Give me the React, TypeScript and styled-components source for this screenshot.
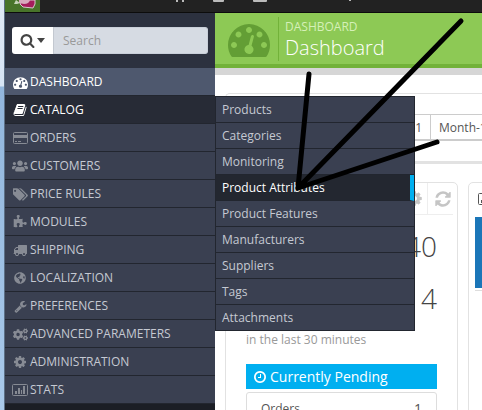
import React from 'react';
import styled, { createGlobalStyle } from 'styled-components';
import { FaUsers, FaGlobeAmericas, FaCogs } from 'react-icons/fa';

const GlobalStyle = createGlobalStyle`
  *, *::before, *::after { box-sizing: border-box; }
  body {
    margin: 0;
    background: #fff;
    color: #555;
    font-family: "Open Sans", "Noto Sans", sans-serif;
    font-size: 12px;
    line-height: 16px;
  }
  ul { list-style: none; margin: 0; padding: 0; }
  a { color: inherit; text-decoration: none; }
  h1, h2, p, dl, dd { margin: 0; font-weight: 400; }
  button { font: inherit; cursor: pointer; }
`;

const paths = {
  search:
    'M1216 832q0-185-131.5-316.5t-316.5-131.5-316.5 131.5-131.5 316.5 131.5 316.5 316.5 131.5 316.5-131.5 131.5-316.5zm512 832q0 52-38 90t-90 38q-54 0-90-38l-343-342q-179 124-399 124-143 0-273.5-55.5t-225-150-150-225-55.5-273.5 55.5-273.5 150-225 225-150 273.5-55.5 273.5 55.5 225 150 150 225 55.5 273.5q0 220-124 399l343 343q37 37 37 90z',
  gauge:
    'M384 1152q0-53-37.5-90.5t-90.5-37.5-90.5 37.5-37.5 90.5 37.5 90.5 90.5 37.5 90.5-37.5 37.5-90.5zm192-448q0-53-37.5-90.5t-90.5-37.5-90.5 37.5-37.5 90.5 37.5 90.5 90.5 37.5 90.5-37.5 37.5-90.5zm428 481l101-382q6-26-7.5-48.5t-38.5-29.5-48 6.5-30 39.5l-101 382q-60 5-107 43.5t-63 98.5q-20 77 20 146t117 89 146-20 89-117q16-60-6-117t-72-91zm660-33q0-53-37.5-90.5t-90.5-37.5-90.5 37.5-37.5 90.5 37.5 90.5 90.5 37.5 90.5-37.5 37.5-90.5zm-640-640q0-53-37.5-90.5t-90.5-37.5-90.5 37.5-37.5 90.5 37.5 90.5 90.5 37.5 90.5-37.5 37.5-90.5zm448 192q0-53-37.5-90.5t-90.5-37.5-90.5 37.5-37.5 90.5 37.5 90.5 90.5 37.5 90.5-37.5 37.5-90.5zm320 448q0 261-141 483-19 29-54 29h-1402q-35 0-54-29-141-221-141-483 0-182 71-348t191-286 286-191 348-71 348 71 286 191 191 286 71 348z',
  book:
    'M1703 478q40 57 18 129l-275 906q-19 64-76.5 107.5t-122.5 43.5h-923q-77 0-148.5-53.5t-99.5-131.5q-24-67-2-127 0-4 3-27t4-37q1-8-3-21.5t-3-19.5q2-11 8-21t16.5-23.5 16.5-23.5q23-38 45-91.5t30-91.5q3-10 .5-30t-.5-28q3-11 17-28t17-23q21-36 42-92t25-90q1-9-2.5-32t.5-28q4-13 22-30.5t22-22.5q19-26 42.5-84.5t27.5-96.5q1-8-3-25.5t-2-26.5q2-8 9-18t18-23 17-21q8-12 16.5-30.5t15-35 16-36 19.5-32 26.5-23.5 36-11.5 47.5 5.5l-1 3q38-9 51-9h761q74 0 114 56t18 130l-274 906q-36 119-71.5 153.5t-128.5 34.5h-869q-27 0-38 15-11 16-1 43 24 70 144 70h923q29 0 56-15.5t35-41.5l300-987q7-22 5-57 38 15 59 43zm-1064 2q-4 13 2 22.5t20 9.5h608q13 0 25.5-9.5t16.5-22.5l21-64q4-13-2-22.5t-20-9.5h-608q-13 0-25.5 9.5t-16.5 22.5zm-83 256q-4 13 2 22.5t20 9.5h608q13 0 25.5-9.5t16.5-22.5l21-64q4-13-2-22.5t-20-9.5h-608q-13 0-25.5 9.5t-16.5 22.5z',
  tags:
    'M384 448q0-53-37.5-90.5t-90.5-37.5-90.5 37.5-37.5 90.5 37.5 90.5 90.5 37.5 90.5-37.5 37.5-90.5zm1067 576q0 53-37 90l-491 492q-39 37-91 37-53 0-90-37l-715-716q-38-37-64.5-101t-26.5-117v-416q0-52 38-90t90-38h416q53 0 117 26.5t102 64.5l715 714q37 39 37 91zm384 0q0 53-37 90l-491 492q-39 37-91 37-36 0-59-14t-53-45l470-470q37-37 37-90 0-52-37-91l-715-714q-38-38-102-64.5t-117-26.5h224q53 0 117 26.5t102 64.5l715 714q37 39 37 91z',
  puzzle:
    'M1755 1083q0 81-44.5 135t-123.5 54q-41 0-77.5-17.5t-59-38-56.5-38-71-17.5q-110 0-110 124 0 39 16 115t15 115v5q-22 0-33 1-34 3-97.5 11.5t-115.5 13.5-98 5q-61 0-103-26.5t-42-83.5q0-37 17.5-71t38-56.5 38-59 17.5-77.5q0-79-54-123.5t-135-44.5q-84 0-143 45.5t-59 127.5q0 43 15 83t33.5 64.5 33.5 53 15 50.5q0 45-46 89-37 35-117 35-95 0-245-24-9-2-27.5-4t-27.5-4l-13-2q-1 0-3-1-2 0-2-1v-1024q2 1 17.5 3.5t34 5 21.5 3.5q150 24 245 24 80 0 117-35 46-44 46-89 0-22-15-50.5t-33.5-53-33.5-64.5-15-83q0-82 59-127.5t144-45.5q80 0 134 44.5t54 123.5q0 41-17.5 77.5t-38 59-38 56.5-17.5 71q0 57 42 83.5t103 26.5q64 0 180-15t163-17v2q-1 2-3.5 17.5t-5 34-3.5 21.5q-24 150-24 245 0 80 35 117 44 46 89 46 22 0 50.5-15t53-33.5 64.5-33.5 83-15q82 0 127.5 59t45.5 143z',
  truck:
    'M640 1408q0-52-38-90t-90-38-90 38-38 90 38 90 90 38 90-38 38-90zm-384-512h384v-256h-158q-13 0-22 9l-195 195q-9 9-9 22v30zm1280 512q0-52-38-90t-90-38-90 38-38 90 38 90 90 38 90-38 38-90zm256-1088v1024q0 15-4 26.5t-13.5 18.5-16.5 11.5-23.5 6-22.5 2-25.5 0-22.5-.5q0 106-75 181t-181 75-181-75-75-181h-384q0 106-75 181t-181 75-181-75-75-181h-64q-3 0-22.5.5t-25.5 0-22.5-2-23.5-6-16.5-11.5-13.5-18.5-4-26.5q0-26 19-45t45-19v-320q0-8-.5-35t0-38 2.5-34.5 6.5-37 14-30.5 22.5-30l198-198q19-19 50.5-32t58.5-13h160v-192q0-26 19-45t45-19h1024q26 0 45 19t19 45z',
  wrench:
    'M448 1472q0-26-19-45t-45-19-45 19-19 45 19 45 45 19 45-19 19-45zm644-420l-682 682q-37 37-90 37-52 0-91-37l-106-108q-38-36-38-90 0-53 38-91l681-681q39 98 114.5 173.5t173.5 114.5zm634-435q0 39-23 106-47 134-164.5 217.5t-258.5 83.5q-185 0-316.5-131.5t-131.5-316.5 131.5-316.5 316.5-131.5q58 0 121.5 16.5t107.5 46.5q16 11 16 28t-16 28l-293 169v224l193 107q5-3 79-48.5t135.5-81 70.5-35.5q15 0 23.5 10t8.5 25z',
  cog:
    'M1152 896q0-106-75-181t-181-75-181 75-75 181 75 181 181 75 181-75 75-181zm512-109v222q0 12-8 23t-20 13l-185 28q-19 54-39 91 35 50 107 138 10 12 10 25t-9 23q-27 37-99 108t-94 71q-12 0-26-9l-138-108q-44 23-91 38-16 136-29 186-7 28-36 28h-222q-14 0-24.5-8.5t-11.5-21.5l-28-184q-49-16-90-37l-141 107q-10 9-25 9-14 0-25-11-126-114-165-168-7-10-7-23 0-12 8-23 15-21 51-66.5t54-70.5q-27-50-41-99l-183-27q-13-2-21-12.5t-8-23.5v-222q0-12 8-23t19-13l186-28q14-46 39-92-40-57-107-138-10-12-10-24 0-10 9-23 26-36 98.5-107.5t94.5-71.5q13 0 26 10l138 107q44-23 91-38 16-136 29-186 7-28 36-28h222q14 0 24.5 8.5t11.5 21.5l28 184q49 16 90 37l142-107q9-9 24-9 13 0 25 10 129 119 165 170 7 8 7 22 0 12-8 23-15 21-51 66.5t-54 70.5q26 50 41 98l183 28q13 2 21 12.5t8 23.5z',
  refresh:
    'M1639 1056q0 5-1 7-64 268-268 434.5t-478 166.5q-146 0-282.5-55t-243.5-157l-129 129q-19 19-45 19t-45-19-19-45v-448q0-26 19-45t45-19h448q26 0 45 19t19 45-19 45l-137 137q71 66 161 102t187 36q134 0 250-65t186-179q11-17 53-117 8-23 30-23h192q13 0 22.5 9.5t9.5 22.5zm25-800v448q0 26-19 45t-45 19h-448q-26 0-45-19t-19-45 19-45l138-138q-148-137-349-137-134 0-250 65t-186 179q-11 17-53 117-8 23-30 23h-199q-13 0-22.5-9.5t-9.5-22.5v-7q65-268 270-434.5t480-166.5q146 0 284 55.5t245 156.5l130-129q19-19 45-19t45 19 19 45z',
  clock:
    'M1024 544v448q0 14-9 23t-23 9h-320q-14 0-23-9t-9-23v-64q0-14 9-23t23-9h224v-352q0-14 9-23t23-9h64q14 0 23 9t9 23zm416 352q0-148-73-273t-198-198-273-73-273 73-198 198-73 273 73 273 198 198 273 73 273-73 198-198 73-273zm224 0q0 209-103 385.5t-279.5 279.5-385.5 103-385.5-103-279.5-279.5-103-385.5 103-385.5 279.5-279.5 385.5-103 385.5 103 279.5 279.5 103 385.5z',
};

type GlyphProps = { name: keyof typeof paths; size?: number };

function Glyph({ name, size = 14 }: GlyphProps) {
  const box = name === 'tags' ? '0 0 1850 1792' : '0 0 1792 1792';
  return (
    <svg width={size} height={size} viewBox={box} fill="currentColor" aria-hidden="true">
      <path d={paths[name]} />
    </svg>
  );
}

const CardIcon = () => (
  <svg width="15" height="12" viewBox="0 0 15 12" aria-hidden="true">
    <rect x="0.5" y="0.5" width="14" height="11" rx="1" fill="none" stroke="currentColor" />
    <path d="M1 3h13v3H1zM2 9h2v1H2zM5 9h3v1H5z" fill="currentColor" />
  </svg>
);

const ChartIcon = () => (
  <svg width="16" height="12" viewBox="0 0 16 12" aria-hidden="true">
    <rect x="0.5" y="0.5" width="15" height="11" rx="1" fill="none" stroke="currentColor" />
    <path d="M3 7h2v3H3zM6 4h2v6H6zM9 6h1v4H9zM11 2h2v8h-2z" fill="currentColor" />
  </svg>
);

const Window = styled.div`
  display: flex;
  height: 100vh;
  overflow: hidden;
  position: relative;
`;

const WindowEdge = styled.div`
  flex: none;
  width: 5px;
  border-right: 1px solid #5c6f85;
  background: linear-gradient(#dfe9f5 0, #d6e4f4 86px, #92b6dc 87px, #a9c9ea 100%);
`;

const Page = styled.div`
  flex: 1;
  min-width: 0;
  display: flex;
  flex-direction: column;
`;

const TopBar = styled.div`
  flex: none;
  height: 13px;
  background: #222;
  border-bottom: 1px solid #0c0c0c;
  overflow: hidden;
  svg { display: block; }
`;

const Body = styled.div`
  flex: 1;
  min-height: 0;
  display: flex;
`;

const Sidebar = styled.nav`
  flex: none;
  width: 210px;
  background: #1b1e25;
`;

const SearchArea = styled.form`
  display: flex;
  height: 55px;
  padding: 14px 7px;
  background: #2c313f;
`;

const SearchScope = styled.button`
  display: flex;
  align-items: center;
  justify-content: center;
  gap: 2px;
  width: 42px;
  padding: 0;
  border: 0;
  border-right: 1px solid #c3c8d0;
  border-radius: 3px 0 0 3px;
  background: #fff;
  color: #444;
`;

const SearchInput = styled.input`
  flex: 1;
  min-width: 0;
  padding: 0 9px;
  border: 1px solid #c9cfd9;
  border-left: 0;
  border-radius: 0 3px 3px 0;
  background: #d6dbe3;
  font: inherit;
  &::placeholder { color: #999; opacity: 1; }
`;

const Menu = styled.ul`
  position: relative;
`;

const tones = {
  current: { bg: '#4e586e', fg: '#fff', icon: '#fff' },
  open: { bg: '#272b36', fg: '#fff', icon: '#fff' },
  normal: { bg: '#3a4051', fg: '#c5c9d2', icon: '#878b94' },
};

const MenuLink = styled.a<{ $tone: keyof typeof tones }>`
  display: flex;
  align-items: center;
  gap: 2px;
  height: 28px;
  padding: 1px 0 0 7px;
  border-bottom: 1px solid #22262f;
  background: ${(p) => tones[p.$tone].bg};
  color: ${(p) => tones[p.$tone].fg};
`;

const MenuIcon = styled.span<{ $tone: keyof typeof tones }>`
  display: flex;
  justify-content: center;
  width: 16px;
  color: ${(p) => tones[p.$tone].icon};
`;

const Submenu = styled.ul`
  position: absolute;
  top: 28px;
  left: 100%;
  z-index: 2;
  width: 200px;
  border: 1px solid #22262f;
  border-bottom: 0;
`;

const SubmenuLink = styled.a<{ $active: boolean }>`
  display: block;
  height: 26px;
  padding: 5px 6px 4px;
  border-bottom: 1px solid #22262f;
  border-right: ${(p) => (p.$active ? '4px solid #00aff0' : '0')};
  background: ${(p) => (p.$active ? '#232730' : '#3a4051')};
  color: ${(p) => (p.$active ? '#fff' : '#c5c9d2')};
`;

const Main = styled.main`
  flex: 1;
  min-width: 0;
  display: flex;
  flex-direction: column;
`;

const PageHead = styled.header`
  flex: none;
  display: flex;
  align-items: center;
  height: 55px;
  padding-left: 13px;
  border-bottom: 4px solid #72b239;
  background: #8dc955;
  color: #639e35;
`;

const Titles = styled.div`
  margin-left: 8px;
  padding-left: 6px;
  border-left: 1px solid #72b239;
  color: #d5f0b8;
  h1 {
    color: #fff;
    font-size: 20px;
    font-weight: 300;
    line-height: 26px;
  }
  p { padding-top: 2px; }
`;

const HeadShadow = styled.div`
  flex: none;
  height: 7px;
  background: #d6d6d6;
`;

const Content = styled.div`
  display: flex;
  flex-direction: column;
  gap: 18px;
  padding: 18px 0 0 10px;
`;

const DateBar = styled.section`
  display: flex;
  height: 71px;
  padding: 20px 0 0 14px;
  border: 1px solid #e2e2e2;
  border-bottom: 3px solid #e2e2e2;
  border-right: 0;
  border-radius: 5px 0 0 5px;
`;

const RangeButton = styled.button`
  flex: none;
  height: 27px;
  padding: 1px 8px 0;
  border: 1px solid #ccc;
  border-left-width: 0;
  border-bottom-width: 2px;
  background: #fff;
  color: #555;
  text-align: right;
  white-space: nowrap;
  &:first-child { width: 191px; border-left-width: 1px; }
`;

const Columns = styled.div`
  display: flex;
  gap: 10px;
`;

const Panel = styled.section`
  flex: none;
  width: 233px;
  height: 300px;
  padding: 0 4px;
  border: 1px solid #e2e2e2;
  border-radius: 5px;
`;

const PanelHead = styled.div`
  display: flex;
  justify-content: flex-end;
  align-items: stretch;
  height: 32px;
  border-bottom: 1px solid #eee;
`;

const IconButton = styled.button`
  display: flex;
  align-items: center;
  justify-content: center;
  width: 26px;
  padding: 0;
  border: 0;
  border-left: 1px solid #eee;
  background: none;
  color: #c5c5c5;
  &:last-child { padding-left: 5px; }
`;

const Stats = styled.div`
  padding: 5px 16px 0;
`;

const Figure = styled.p`
  height: 52px;
  color: #444;
  font-size: 28px;
  font-weight: 300;
  line-height: 52px;
  text-align: right;
`;

const Note = styled.p`
  padding-top: 8px;
  color: #999;
`;

const PendingTitle = styled.h2`
  display: flex;
  align-items: center;
  gap: 3px;
  height: 25px;
  margin: 16px 0 3px;
  padding-left: 7px;
  background: #00aff0;
  color: #fff;
  font-size: 14px;
`;

const PendingRow = styled.dl`
  display: flex;
  justify-content: space-between;
  height: 40px;
  padding: 6px 14px;
  border: 1px solid #ddd;
  border-radius: 3px;
  line-height: 20px;
  dd { font-size: 14px; }
`;

const SidePanel = styled(Panel)`
  padding: 0 6px;
`;

const SideHead = styled(PanelHead)`
  justify-content: flex-start;
  align-items: center;
  padding-left: 3px;
  border-bottom: 0;
  color: #555;
`;

const Banner = styled.div`
  height: 76px;
  border-bottom: 1px solid #ddd;
  padding: 2px 0;
  background: #1b76b8 content-box;
`;

const Marker = styled.svg`
  position: absolute;
  inset: 0;
  z-index: 3;
  pointer-events: none;
`;

const menuItems: { label: string; icon: React.ReactNode; tone?: keyof typeof tones }[] = [
  { label: 'DASHBOARD', icon: <Glyph name="gauge" size={15} />, tone: 'current' },
  { label: 'CATALOG', icon: <Glyph name="book" />, tone: 'open' },
  { label: 'ORDERS', icon: <CardIcon /> },
  { label: 'CUSTOMERS', icon: <FaUsers size={16} /> },
  { label: 'PRICE RULES', icon: <Glyph name="tags" size={15} /> },
  { label: 'MODULES', icon: <Glyph name="puzzle" /> },
  { label: 'SHIPPING', icon: <Glyph name="truck" /> },
  { label: 'LOCALIZATION', icon: <FaGlobeAmericas size={12} /> },
  { label: 'PREFERENCES', icon: <Glyph name="wrench" size={13} /> },
  { label: 'ADVANCED PARAMETERS', icon: <FaCogs size={15} /> },
  { label: 'ADMINISTRATION', icon: <Glyph name="cog" /> },
  { label: 'STATS', icon: <ChartIcon /> },
];

const catalogItems = [
  'Products',
  'Categories',
  'Monitoring',
  'Product Attributes',
  'Product Features',
  'Manufacturers',
  'Suppliers',
  'Tags',
  'Attachments',
];

export default function App() {
  return (
    <>
      <GlobalStyle />
      <Window>
        <WindowEdge />
        <Page>
          <TopBar>
            <svg width="477" height="12" viewBox="0 0 477 12" aria-hidden="true">
              <path d="M0 0h35v12H0z" fill="#48742a" />
              <path d="M17 0h13v4l-2 4-10-1-3-3z" fill="#a51e5c" stroke="#d9c7cd" />
              <path d="M14 0h11q-1 4-6 4l-5-1z" fill="#d8a9bd" />
              <path d="M9 4l2-4 4 3-3 1z" fill="#c5d4b8" />
              <path d="M171 0h2v2h-2zM177 0h2v2h-2zM208 0h11v1q0 1-1 1h-9q-1 0-1-1zM248 0h14v1q0 1-1 1h-12q-1 0-1-1zM344 0h2v1h-2z" fill="#bbb" />
            </svg>
          </TopBar>
          <Body>
            <Sidebar>
              <SearchArea>
                <SearchScope type="button" aria-label="Search scope">
                  <Glyph name="search" size={15} />
                  <svg width="8" height="5" viewBox="0 0 8 5" aria-hidden="true">
                    <path d="M0 0h8L4 5z" fill="#444" />
                  </svg>
                </SearchScope>
                <SearchInput type="text" placeholder="Search" aria-label="Search" />
              </SearchArea>
              <Menu>
                {menuItems.map(({ label, icon, tone = 'normal' }) => (
                  <li key={label}>
                    <MenuLink href="#" $tone={tone}>
                      <MenuIcon $tone={tone}>{icon}</MenuIcon>
                      {label}
                    </MenuLink>
                    {tone === 'open' && (
                      <Submenu>
                        {catalogItems.map((item) => (
                          <li key={item}>
                            <SubmenuLink href="#" $active={item === 'Product Attributes'}>
                              {item}
                            </SubmenuLink>
                          </li>
                        ))}
                      </Submenu>
                    )}
                  </li>
                ))}
              </Menu>
            </Sidebar>
            <Main>
              <PageHead>
                <Glyph name="gauge" size={42} />
                <Titles>
                  <p>DASHBOARD</p>
                  <h1>Dashboard</h1>
                </Titles>
              </PageHead>
              <HeadShadow />
              <Content>
                <DateBar>
                  <RangeButton type="button">Day-1</RangeButton>
                  <RangeButton type="button">Month-1</RangeButton>
                </DateBar>
                <Columns>
                  <Panel>
                    <PanelHead>
                      <IconButton type="button" aria-label="Configure">
                        <Glyph name="cog" size={17} />
                      </IconButton>
                      <IconButton type="button" aria-label="Refresh">
                        <Glyph name="refresh" size={18} />
                      </IconButton>
                    </PanelHead>
                    <Stats>
                      <Figure>40</Figure>
                      <Figure>4</Figure>
                      <Note>in the last 30 minutes</Note>
                      <PendingTitle>
                        <Glyph name="clock" />
                        Currently Pending
                      </PendingTitle>
                      <PendingRow>
                        <dt>Orders</dt>
                        <dd>1</dd>
                      </PendingRow>
                    </Stats>
                  </Panel>
                  <SidePanel>
                    <SideHead>
                      <ChartIcon />
                    </SideHead>
                    <Banner />
                  </SidePanel>
                </Columns>
              </Content>
            </Main>
          </Body>
        </Page>
        <Marker width="482" height="410" viewBox="0 0 482 410" aria-hidden="true">
          <path
            d="M309 74L298 188L461 21M298 188L437 142"
            fill="none"
            stroke="#000"
            strokeWidth="5"
            strokeLinecap="round"
            strokeLinejoin="round"
          />
        </Marker>
      </Window>
    </>
  );
}
